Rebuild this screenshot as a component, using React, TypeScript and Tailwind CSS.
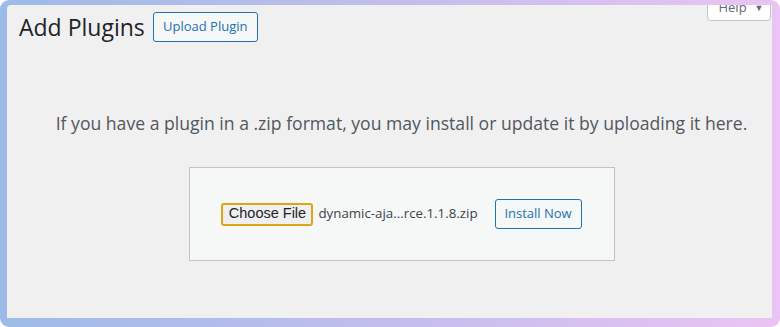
import React from "react";

export default function App() {
  return (
    <div className="w-[780px] h-[327px] rounded-[9px] bg-gradient-to-r from-[#9dbbe8] via-[#c2bdec] to-[#eac4f3] pt-[5px] pl-[7px] pr-[8px] pb-[9px]">
      <div
        className="relative h-full w-full overflow-hidden rounded-tl-[4px] bg-[#f0f0f1]"
        style={{ fontFamily: '"Open Sans", "Noto Sans", sans-serif' }}
      >
        <div className="absolute right-[1px] top-[-10px] flex h-[26px] w-[64px] items-center justify-center gap-[8px] rounded-b-[4px] border border-[#c3c4c7] bg-white pl-[4px] text-[13px] text-[#646970]">
          <span>Help</span>
          <span className="text-[9px]">▼</span>
        </div>

        <div className="flex items-center gap-[8px] pl-[12px] pt-[7px]">
          <h1 className="text-[23px] font-normal leading-[30px] text-[#1d2327]">Add Plugins</h1>
          <button className="h-[30px] w-[105px] rounded-[3px] border border-[#2271b1] bg-[#f6f7f7] text-[13px] text-[#2271b1]">
            Upload Plugin
          </button>
        </div>

        <div className="pl-[24px]">
          <p className="mt-[69px] whitespace-nowrap text-center text-[17.6px] leading-[24px] text-[#50575e]">
            If you have a plugin in a .zip format, you may install or update it by uploading it here.
          </p>
          <div className="mx-auto mt-[32px] flex h-[94px] w-[426px] items-center justify-center border border-[#c3c4c7] bg-[#f6f7f7]">
            <div className="flex items-center">
              <span
                className="flex h-[23px] w-[92px] items-center justify-center rounded-[3px] border-2 border-[#dba617] bg-[#efefef] text-[14.5px] text-[#1d2327]"
                style={{ fontFamily: '"Liberation Sans", Arial, sans-serif' }}
              >
                Choose File
              </span>
              <span className="ml-[5px] text-[13.3px] text-[#3c434a]">dynamic-aja...rce.1.1.8.zip</span>
              <button className="ml-[17px] h-[30px] w-[87px] rounded-[3px] border border-[#2271b1] bg-[#f6f7f7] text-[13px] text-[#2271b1]">
                Install Now
              </button>
            </div>
          </div>
        </div>
      </div>
    </div>
  );
}
